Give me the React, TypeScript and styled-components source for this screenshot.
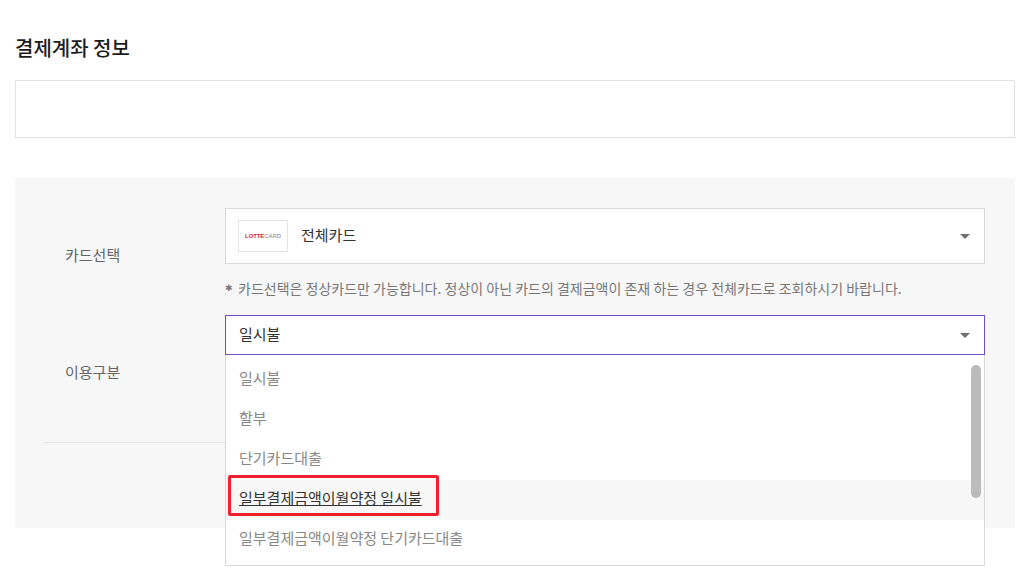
import React from "react";
import styled, { createGlobalStyle } from "styled-components";

const GlobalStyle = createGlobalStyle`
  html, body {
    margin: 0;
    padding: 0;
    background: #fff;
    font-family: "Noto Sans CJK KR", "Noto Sans", sans-serif;
    font-size: 15px;
    overflow: hidden;
  }
  * { box-sizing: border-box; }
`;

const Page = styled.div`
  width: 1026px;
  height: 577px;
  padding: 35px 11px 0 15px;
`;

const Title = styled.h2`
  margin: 0;
  height: 25px;
  line-height: 25px;
  font-size: 20px;
  font-weight: 500;
  color: #1c1c1c;
`;

const EmptyBox = styled.div`
  height: 58px;
  margin-top: 20px;
  border: 1px solid #e1e1e1;
`;

const Panel = styled.div`
  height: 350px;
  margin-top: 40px;
  padding: 30px 30px 0 29px;
  background: #f7f7f7;
`;

const Row = styled.div<{ $height: number; $last?: boolean }>`
  display: flex;
  align-items: center;
  height: ${(p) => p.$height}px;
  margin-bottom: 13px;
  ${(p) => p.$last && "border-bottom: 1px solid #e4e4e4; height: " + (p.$height + 14) + "px; margin-bottom: 0; padding-bottom: 14px;"}
`;

const Label = styled.div`
  width: 181px;
  padding-left: 21px;
  color: #666;
  font-size: 15px;
  line-height: 20px;
`;

const Field = styled.div`
  position: relative;
  align-self: flex-start;
  width: 760px;
`;

const Select = styled.div<{ $open?: boolean; $tall?: boolean }>`
  position: relative;
  display: flex;
  align-items: center;
  height: ${(p) => (p.$tall ? 56 : 40)}px;
  padding-left: ${(p) => (p.$tall ? 12 : 13)}px;
  padding-bottom: 3px;
  border: 1px solid ${(p) => (p.$open ? "#6f4cc4" : "#d9d9d9")};
  background: #fff;
  color: #333;
  font-size: 15px;
`;

const Caret = styled.span`
  position: absolute;
  right: 14px;
  top: 50%;
  margin-top: -2px;
  border-style: solid;
  border-width: 5px 5px 0;
  border-color: #707070 transparent transparent;
`;

const LogoBox = styled.span`
  display: flex;
  align-items: center;
  justify-content: center;
  width: 50px;
  height: 32px;
  margin-top: 3px;
  margin-right: 13px;
  border: 1px solid #e5e5e5;
  background: #fff;
  white-space: nowrap;
  font-family: "Liberation Sans", sans-serif;
  font-size: 6px;
  line-height: 8px;
  letter-spacing: -0.1px;
`;

const LogoRed = styled.span`
  color: #d8263c;
  font-weight: 700;
`;

const LogoGrey = styled.span`
  color: #888;
`;

const Note = styled.p`
  display: flex;
  align-items: center;
  margin: 14px 0 0;
  color: #777;
  font-size: 14px;
  line-height: 20px;
  white-space: nowrap;
`;

const Asterisk = styled.span`
  width: 13px;
  font-size: 9px;
  color: #777;
`;

const Menu = styled.ul`
  position: absolute;
  left: 0;
  right: 0;
  top: 40px;
  margin: 0;
  padding: 5px 0 5px;
  height: 211px;
  list-style: none;
  border: 1px solid #d9d9d9;
  border-top: none;
  background: #fff;
  overflow: hidden;
`;

const Item = styled.li<{ $active?: boolean }>`
  height: 40px;
  padding-left: 13px;
  line-height: 35px;
  font-size: 15px;
  color: ${(p) => (p.$active ? "#333" : "#888")};
  background: ${(p) => (p.$active ? "#f7f7f7" : "transparent")};
  text-decoration: ${(p) => (p.$active ? "underline" : "none")};
`;

const Thumb = styled.div`
  position: absolute;
  top: 10px;
  right: 3px;
  width: 10px;
  height: 133px;
  border-radius: 5px;
  background: #bbb;
`;

const Callout = styled.div`
  position: absolute;
  left: 2px;
  top: 120px;
  width: 211px;
  height: 41px;
  border: 3px solid #f0202e;
  border-radius: 2px;
`;

const options = ["일시불", "할부", "단기카드대출", "일부결제금액이월약정 일시불", "일부결제금액이월약정 단기카드대출"];

export default function App() {
  return (
    <Page>
      <GlobalStyle />
      <Title>결제계좌 정보</Title>
      <EmptyBox />
      <Panel>
        <Row $height={94}>
          <Label>카드선택</Label>
          <Field>
            <Select $tall>
              <LogoBox>
                <LogoRed>LOTTE</LogoRed>
                <LogoGrey>CARD</LogoGrey>
              </LogoBox>
              전체카드
              <Caret />
            </Select>
            <Note>
              <Asterisk>✱</Asterisk>
              카드선택은 정상카드만 가능합니다. 정상이 아닌 카드의 결제금액이 존재 하는 경우 전체카드로 조회하시기 바랍니다.
            </Note>
          </Field>
        </Row>
        <Row $height={114} $last>
          <Label>이용구분</Label>
          <Field>
            <Select $open>
              일시불
              <Caret />
            </Select>
            <Menu>
              {options.map((o, i) => (
                <Item key={o} $active={i === 3}>
                  {o}
                </Item>
              ))}
              <Thumb />
              <Callout />
            </Menu>
          </Field>
        </Row>
      </Panel>
    </Page>
  );
}
